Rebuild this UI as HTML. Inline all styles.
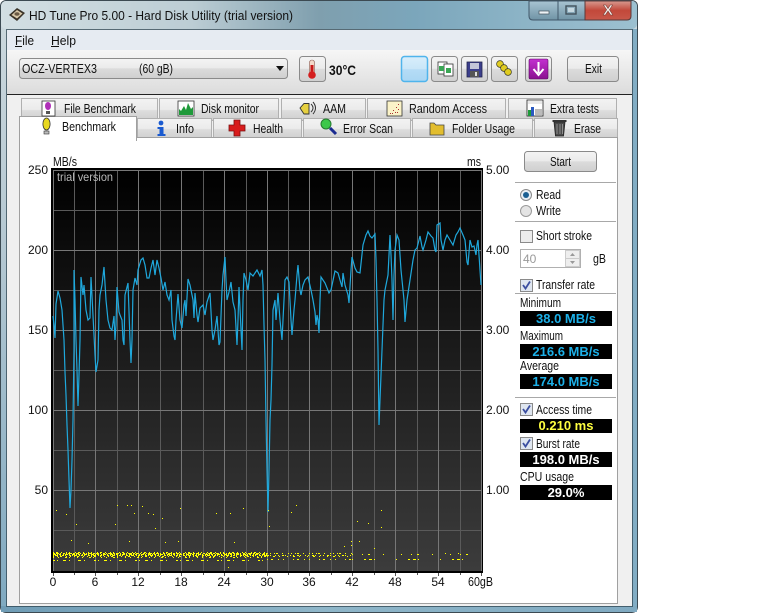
<!DOCTYPE html>
<html><head><meta charset="utf-8"><style>
html,body{margin:0;padding:0;background:#fff;width:768px;height:614px;overflow:hidden}
svg{position:absolute;left:0;top:0;display:block}
text{font-family:"Liberation Sans",sans-serif;font-size:12px;fill:#111}
text[textLength]{font-size:12.6px}
.v{font-size:13px;font-weight:bold;text-anchor:middle}
.a{text-anchor:end}.m{text-anchor:middle}
</style></head><body>
<svg width="768" height="614" viewBox="0 0 768 614" xmlns="http://www.w3.org/2000/svg">
<defs>
<linearGradient id="ti" x1="0" x2="1" y1="0" y2="0"><stop offset="0" stop-color="#d3dfe3"/><stop offset=".3" stop-color="#bccdd4"/><stop offset=".5" stop-color="#7f9fae"/><stop offset=".65" stop-color="#7ba6bb"/><stop offset=".85" stop-color="#8fb6c8"/><stop offset="1" stop-color="#9cc0d0"/></linearGradient>
<linearGradient id="lf" x1="0" x2="0" y1="0" y2="1"><stop offset="0" stop-color="#cdd9de"/><stop offset=".4" stop-color="#b5c8d2"/><stop offset="1" stop-color="#7fa9c0"/></linearGradient>
<linearGradient id="bf" x1="0" x2="1" y1="0" y2="0"><stop offset="0" stop-color="#6f9cb5"/><stop offset=".5" stop-color="#8fb6c9"/><stop offset="1" stop-color="#80aac1"/></linearGradient>
<linearGradient id="tb" x1="0" x2="0" y1="0" y2="1"><stop offset="0" stop-color="#f6f6f6"/><stop offset="1" stop-color="#dcdcdc"/></linearGradient>
<linearGradient id="bt" x1="0" x2="0" y1="0" y2="1"><stop offset="0" stop-color="#f4f4f4"/><stop offset=".48" stop-color="#ebebeb"/><stop offset=".5" stop-color="#dcdcdc"/><stop offset="1" stop-color="#cfcfcf"/></linearGradient>
<linearGradient id="tab" x1="0" x2="0" y1="0" y2="1"><stop offset="0" stop-color="#f3f3f3"/><stop offset=".5" stop-color="#ebebeb"/><stop offset=".55" stop-color="#dddddd"/><stop offset="1" stop-color="#cfcfcf"/></linearGradient>
<linearGradient id="pl" x1="0" x2="0" y1="0" y2="1"><stop offset="0" stop-color="#000"/><stop offset="1" stop-color="#3c3c3c"/></linearGradient>
<linearGradient id="blue" x1="0" x2="0" y1="0" y2="1"><stop offset="0" stop-color="#d9eefb"/><stop offset=".5" stop-color="#c9e6f8"/><stop offset=".52" stop-color="#b5dcf6"/><stop offset="1" stop-color="#a9d6f3"/></linearGradient>
<linearGradient id="red" x1="0" x2="0" y1="0" y2="1"><stop offset="0" stop-color="#d79a90"/><stop offset=".5" stop-color="#c2483a"/><stop offset="1" stop-color="#c8584a"/></linearGradient>
<linearGradient id="capb" x1="0" x2="0" y1="0" y2="1"><stop offset="0" stop-color="#a8c4d2"/><stop offset="1" stop-color="#6f93a5"/></linearGradient>
<linearGradient id="pur" x1="0" x2="0" y1="0" y2="1"><stop offset="0" stop-color="#c32fd0"/><stop offset="1" stop-color="#8a1090"/></linearGradient>
</defs>

<!-- window frame -->
<rect x="0" y="0" width="638" height="613" rx="6" fill="#3c4a52"/>
<rect x="1" y="1" width="636" height="611" rx="5" fill="url(#lf)"/>
<rect x="1" y="1" width="636" height="28" rx="5" fill="url(#ti)"/>
<rect x="632" y="29" width="5" height="583" fill="#82adc4"/>
<rect x="1" y="606" width="636" height="6" fill="url(#bf)"/>
<rect x="6" y="29" width="627" height="578" fill="#2f4552" opacity=".75"/>
<rect x="7" y="30" width="625" height="576" fill="#f0f0f0"/>

<!-- title -->
<g><path d="M9 15 L17 8 L25 13 L17 21 Z" fill="#3a3328"/><path d="M11.500 15 L17 10 L22.500 13.500 L17 18.500 Z" fill="#d8c8a8"/><ellipse cx="17" cy="14" rx="2.600" ry="1.800" fill="#6a5a44"/></g>
<text x="29" y="20" style="font-size:13.2px" textLength="264" lengthAdjust="spacingAndGlyphs">HD Tune Pro 5.00 - Hard Disk Utility (trial version)</text>

<!-- caption buttons -->
<path d="M529 1 V16 Q529 20 533 20 H585 V1 Z" fill="url(#capb)" stroke="#41586a" stroke-width="1"/>
<path d="M585 1 H631 V16 Q631 20 627 20 H585 Z" fill="url(#red)" stroke="#5a3a3a" stroke-width="1"/>
<line x1="558" y1="1" x2="558" y2="20" stroke="#41586a"/>
<rect x="539" y="11" width="10" height="3" fill="#eef3f6" stroke="#42525c" stroke-width=".7"/>
<rect x="566" y="6" width="10" height="8" fill="none" stroke="#42525c" stroke-width="1.4"/><rect x="568" y="8" width="6" height="4" fill="#c7d8e0"/>
<text x="608" y="15" class="m" style="font-size:15px;font-weight:bold;fill:#f8eeea;stroke:#6a3a34;stroke-width:.5">X</text>

<!-- menu + toolbar -->
<rect x="7" y="30" width="625" height="20" fill="#e6ebf2"/>
<rect x="7" y="50" width="625" height="44" fill="url(#tb)"/>
<rect x="7" y="94" width="625" height="1" fill="#222"/>
<text x="15" y="45" textLength="19" lengthAdjust="spacingAndGlyphs">File</text><line x1="15" y1="46.5" x2="22" y2="46.5" stroke="#111"/>
<text x="51" y="45" textLength="25" lengthAdjust="spacingAndGlyphs">Help</text><line x1="51" y1="46.5" x2="59" y2="46.5" stroke="#111"/>

<!-- combo -->
<rect x="19.500" y="58.500" width="268" height="20" rx="3" fill="url(#bt)" stroke="#8a8a8a"/>
<text x="22" y="73" textLength="75" lengthAdjust="spacingAndGlyphs">OCZ-VERTEX3</text>
<text x="139" y="73" textLength="34" lengthAdjust="spacingAndGlyphs">(60 gB)</text>
<path d="M276 66 h8 l-4 5 z" fill="#111"/>

<!-- toolbar buttons -->
<rect x="299.500" y="56.500" width="26" height="25" rx="3" fill="url(#bt)" stroke="#8a8a8a"/>
<g><rect x="309.500" y="60" width="5" height="14" rx="2.500" fill="#f2d8c8" stroke="#8a5a50" stroke-width=".6"/><rect x="310.500" y="65" width="3" height="9" fill="#c81818"/><circle cx="312" cy="75" r="3.800" fill="#d41e1e"/></g>
<text x="329" y="75" style="font-size:13.4px;font-weight:bold" textLength="27" lengthAdjust="spacingAndGlyphs">30°C</text>

<rect x="401.500" y="56.500" width="26" height="25" rx="3" fill="url(#blue)" stroke="#4fb4ec" stroke-width="1.500"/>
<rect x="431.500" y="56.500" width="26" height="25" rx="3" fill="url(#bt)" stroke="#8a8a8a"/>
<rect x="461.500" y="56.500" width="26" height="25" rx="3" fill="url(#bt)" stroke="#8a8a8a"/>
<rect x="491.500" y="56.500" width="26" height="25" rx="3" fill="url(#bt)" stroke="#8a8a8a"/>
<rect x="525.500" y="56.500" width="26" height="25" rx="3" fill="url(#bt)" stroke="#8a8a8a"/>
<rect x="567.500" y="56.500" width="51" height="25" rx="3" fill="url(#bt)" stroke="#8a8a8a"/>
<text x="585" y="73" textLength="17" lengthAdjust="spacingAndGlyphs">Exit</text>
<!-- copy icon -->
<rect x="438" y="62" width="9" height="12" fill="#fff" stroke="#333" stroke-width=".8"/><rect x="444" y="64" width="9" height="12" fill="#fff" stroke="#333" stroke-width=".8"/><rect x="439" y="66" width="5" height="5" fill="#3aa655"/><rect x="446" y="68" width="5" height="5" fill="#3aa655"/>
<!-- save icon -->
<rect x="467" y="62" width="15" height="15" fill="#3c3f8c" stroke="#22244e" stroke-width=".8"/><rect x="470" y="63" width="9" height="6" fill="#c4c6d8"/><rect x="470" y="71" width="9" height="6" fill="#555"/><rect x="475" y="72" width="2" height="4" fill="#ddd"/>
<!-- options icon -->
<g stroke="#3a3a20" stroke-width=".7" fill="#e0cc20"><circle cx="500" cy="64" r="3.400"/><circle cx="504" cy="68" r="3.400"/><circle cx="508" cy="72" r="3.400"/></g>
<!-- purple -->
<rect x="529" y="59" width="19" height="20" rx="1.500" fill="url(#pur)" stroke="#5a0a60" stroke-width=".6"/>
<path d="M538.500 62 V73 M533.500 69 L538.500 75 L543.500 69" fill="none" stroke="#fff" stroke-width="2"/>

<!-- back tabs -->
<g fill="url(#tab)" stroke="#b0b0b0">
<rect x="21.500" y="98.500" width="136" height="22"/>
<rect x="159.500" y="98.500" width="119" height="22"/>
<rect x="281.500" y="98.500" width="84" height="22"/>
<rect x="367.500" y="98.500" width="138" height="22"/>
<rect x="508.500" y="98.500" width="108" height="22"/>
<rect x="137.500" y="118.500" width="74" height="20"/>
<rect x="213.500" y="118.500" width="88" height="20"/>
<rect x="303.500" y="118.500" width="107" height="20"/>
<rect x="412.500" y="118.500" width="120" height="20"/>
<rect x="534.500" y="118.500" width="83" height="20"/>
</g>
<!-- page -->
<rect x="19.500" y="137.500" width="598" height="466" fill="#fff" stroke="#a0a0a0"/>
<rect x="19.500" y="116.500" width="117" height="24" fill="#fff" stroke="#a0a0a0"/>
<rect x="20" y="130" width="116" height="12" fill="#fff"/>

<text x="64" y="113" textLength="72" lengthAdjust="spacingAndGlyphs">File Benchmark</text>
<text x="201" y="113" textLength="58" lengthAdjust="spacingAndGlyphs">Disk monitor</text>
<text x="323" y="113" textLength="23" lengthAdjust="spacingAndGlyphs">AAM</text>
<text x="409" y="113" textLength="78" lengthAdjust="spacingAndGlyphs">Random Access</text>
<text x="550" y="113" textLength="49" lengthAdjust="spacingAndGlyphs">Extra tests</text>
<text x="62" y="131" textLength="54" lengthAdjust="spacingAndGlyphs">Benchmark</text>
<text x="176" y="133" textLength="18" lengthAdjust="spacingAndGlyphs">Info</text>
<text x="253" y="133" textLength="30" lengthAdjust="spacingAndGlyphs">Health</text>
<text x="343" y="133" textLength="50" lengthAdjust="spacingAndGlyphs">Error Scan</text>
<text x="452" y="133" textLength="63" lengthAdjust="spacingAndGlyphs">Folder Usage</text>
<text x="574" y="133" textLength="27" lengthAdjust="spacingAndGlyphs">Erase</text>

<!-- tab icons -->
<rect x="42" y="101" width="13" height="15" fill="#fff" stroke="#333" stroke-width=".8"/><ellipse cx="48" cy="106" rx="3" ry="4" fill="#b030b8"/><rect x="46" y="111" width="4" height="3" fill="#555"/>
<rect x="178" y="101" width="16" height="15" fill="#fff" stroke="#333" stroke-width=".8"/><path d="M179 115 V109 L181 111 L184 106 L186 110 L188 103 L191 109 L193 107 V115 Z" fill="#1f9a3a"/>
<path d="M300 108 L304 103.500 H309 V114 H304 Z" fill="#e6d040" stroke="#333" stroke-width=".9"/><path d="M311 104 Q315 108 311 112 M313 102 Q318 108 313 114" fill="none" stroke="#333"/>
<rect x="387" y="101" width="15" height="15" fill="#fbf3c8" stroke="#333" stroke-width=".8"/><path d="M390 113h1v1h-1zM393 110h1v1h-1zM396 107h1v1h-1zM398 104h1v1h-1zM395 112h1v1h-1zM398 109h1v1h-1zM392 113h1v1h-1zM397 112h1v1h-1z" fill="#a33"/>
<rect x="527" y="100" width="16" height="16" fill="#fff" stroke="#222" stroke-width=".8"/><rect x="528" y="101" width="14" height="3" fill="#e8e8e8"/><rect x="528" y="110" width="3" height="6" fill="#1f9a3a"/><rect x="531" y="107" width="3" height="9" fill="#2a5ac0"/><path d="M535 109h7v6h-7z" fill="#bbb"/>
<ellipse cx="46.500" cy="124" rx="3.600" ry="6" fill="#e8d820" stroke="#333" stroke-width=".8"/><rect x="44" y="131" width="5" height="3" fill="#bbb" stroke="#333" stroke-width=".6"/>
<circle cx="161" cy="123" r="2.400" fill="#1a5ad0"/><path d="M157.500 127 h6 v7 h2 v2 h-8 v-2 h2 v-5 h-2 z" fill="#1a5ad0"/>
<path d="M234 120 h6 v5 h5 v6 h-5 v5 h-6 v-5 h-5 v-6 h5 z" fill="#d81c1c" stroke="#7a1010" stroke-width=".8"/>
<circle cx="326" cy="124" r="5" fill="#3cc84a" stroke="#267a30"/><path d="M330 128 L336 134" stroke="#1a2a90" stroke-width="3"/>
<path d="M430 123 h4 l2 2 h8 v10 h-14 z" fill="#e2bd2e" stroke="#444" stroke-width=".8"/>
<path d="M554 122 h11 l-1.500 14 h-8 z" fill="#4a4a4a" stroke="#222" stroke-width=".8"/><rect x="552.500" y="120" width="14" height="2" fill="#333"/><path d="M557 124v10M560 124v10M562.500 124v10" stroke="#bbb" stroke-width=".6"/>

<!-- plot -->
<rect x="51" y="168" width="432" height="405" fill="#000"/>
<rect x="53" y="170" width="429" height="401" fill="url(#pl)"/>
<g stroke="#5a5a5a" stroke-width="1">
<path d="M74.500 170V571M117.500 170V571M160.500 170V571M203.500 170V571M246.500 170V571M288.500 170V571M331.500 170V571M374.500 170V571M417.500 170V571M460.500 170V571"/>
<path d="M53 210.500H482M53 290.500H482M53 370.500H482M53 450.500H482M53 530.500H482"/>
</g>
<g stroke="#777" stroke-width="1">
<path d="M53.500 170V571M95.500 170V571M138.500 170V571M181.500 170V571M224.500 170V571M267.500 170V571M309.500 170V571M352.500 170V571M395.500 170V571M438.500 170V571M481.500 170V571"/>
<path d="M53 170.500H482M53 250.500H482M53 330.500H482M53 410.500H482M53 490.500H482"/>
</g>
<text x="57" y="181" style="fill:#b8b8b8;font-size:12px" textLength="56" lengthAdjust="spacingAndGlyphs">trial version</text>

<!-- trace -->
<polyline fill="none" stroke="#1fa8dc" stroke-width="1.200" points="53,316 54,325 55,338 56,304 58,291 60,298 62,310 63,325 64,340 65,372 66,395 67,425 68,450 69,480 70,508 71,490 72,460 73,420 74,350 74,270 75,300 76,340 77,370 78,406 79,375 80,340 81,277 83,295 84,285 86,310 88,320 90,318 91,277 92,296 94,335 95,355 96,372 98,360 99,310 100,295 102,285 104,267 106,300 108,320 110,328 112,330 114,316 115,340 116,325 117,287 119,312 120,315 122,320 123,340 124,345 125,295 128,283 130,340 131,363 132,340 133,290 135,278 137,285 138,270 141,260 143,258 145,265 147,278 149,278 151,268 153,260 155,275 157,260 159,268 161,278 163,290 165,282 167,295 169,300 171,290 172,320 174,336 175,340 176,320 178,294 180,320 182,328 184,305 185,300 186,316 188,279 190,285 193,300 194,318 195,293 197,315 198,322 200,308 203,305 205,315 207,302 210,293 212,330 213,340 215,330 217,316 219,345 220,342 222,290 223,275 225,257 226,280 227,300 229,292 231,282 233,302 235,310 237,345 238,320 239,287 241,330 242,350 243,300 244,273 246,280 248,290 250,273 253,276 257,270 260,276 262,270 263,285 264,325 265,360 266,420 267,470 268,512 269,470 270,420 271,400 272,365 273,310 275,300 276,320 278,293 280,320 282,340 284,300 285,280 287,277 289,282 291,320 292,335 294,310 295,300 297,275 298,265 300,290 301,295 303,285 305,280 308,277 311,290 313,300 315,312 316,325 317,315 318,320 319,333 320,300 321,277 325,283 329,293 331,290 335,271 338,273 340,280 342,287 343,273 345,285 348,295 349,303 351,270 352,257 355,268 357,272 360,273 363,245 366,235 368,231 370,236 372,238 375,234 376,260 377,300 378,350 379,425 380,400 382,350 384,300 385,290 388,275 390,235 391,255 392,280 393,320 394,275 395,250 397,235 399,240 401,270 402,280 404,300 405,322 407,300 410,280 413,260 415,250 417,248 420,236 422,247 423,250 426,240 428,232 431,236 433,238 435,250 436,252 437,225 440,223 441,240 443,250 445,240 447,235 450,240 453,245 456,235 458,232 460,228 463,235 465,240 467,262 468,265 470,240 472,247 474,246 476,255 477,245 478,240 480,270 481,285"/>

<!-- access dots -->
<g fill="none" stroke="#ffff00" stroke-width="1">
<path d="M53 552.500H267" stroke-dasharray="1 2 2 3 1 4 1 2 1 5"/>
<path d="M53 553.500H267" stroke-dasharray="2 1 3 1 1 2 2 1 1 1 4 1"/>
<path d="M53 554.500H267" stroke-dasharray="3 1 1 1 2 2 1 1 3 1 1 2"/>
<path d="M53 555.500H267" stroke-dasharray="1 1 3 2 1 1 2 1 1 3 2 1"/>
<path d="M53 556.500H267" stroke-dasharray="1 3 1 2 2 4 1 3"/>
<path d="M53 557.500H267" stroke-dasharray="1 4 1 6 2 2 1 7"/>
<path d="M53 560.500H267" stroke-dasharray="2 2 1 5 3 3 1 8 3 3 1 9"/>
<path d="M267 553.500H352" stroke-dasharray="1 2 1 3 1 1 2 4 1 5"/>
<path d="M267 555.500H352" stroke-dasharray="2 1 1 4 1 2 1 3"/>
<path d="M267 556.500H352" stroke-dasharray="1 5 2 4 1 7"/>
<path d="M267 559.500H352" stroke-dasharray="1 3 2 5 1 4 1 9"/>
<path d="M352 554.500H470" stroke-dasharray="1 9 1 5 2 13 1 17"/>
<path d="M352 559.500H470" stroke-dasharray="1 11 2 3 3 2 1 21"/>
</g>
<path d="M56 510h1v1h-1zM66 514h1v1h-1zM76 524h1v1h-1zM71 540h1v1h-1zM88 543h1v1h-1zM117 505h1v1h-1zM127 505h1v1h-1zM131 505h1v1h-1zM142 506h1v1h-1zM134 513h1v1h-1zM148 513h1v1h-1zM153 514h1v1h-1zM115 524h1v1h-1zM162 518h1v1h-1zM155 528h1v1h-1zM129 541h1v1h-1zM165 542h1v1h-1zM178 541h1v1h-1zM180 508h1v1h-1zM216 513h1v1h-1zM230 513h1v1h-1zM243 508h1v1h-1zM234 542h1v1h-1zM268 510h1v1h-1zM269 526h1v1h-1zM291 512h1v1h-1zM296 505h1v1h-1zM357 521h1v1h-1zM368 523h1v1h-1zM381 510h1v1h-1zM381 527h1v1h-1zM351 541h1v1h-1zM359 541h1v1h-1zM351 545h1v1h-1zM344 546h1v1h-1zM374 548h1v1h-1zM458 553h1v1h-1zM445 553h1v1h-1zM228 567h1v1h-1z" fill="#ffff00"/>

<!-- bottom ticks -->
<path d="M53.500 573v3M74.500 573v2M95.500 573v3M117.500 573v2M138.500 573v3M160.500 573v2M181.500 573v3M203.500 573v2M224.500 573v3M246.500 573v2M267.500 573v3M288.500 573v2M309.500 573v3M331.500 573v2M352.500 573v3M374.500 573v2M395.500 573v3M417.500 573v2M438.500 573v3M460.500 573v2M481.500 573v3" stroke="#555"/>

<!-- axis labels -->
<text x="53" y="166" textLength="24" lengthAdjust="spacingAndGlyphs">MB/s</text>
<text x="467" y="166" textLength="14" lengthAdjust="spacingAndGlyphs">ms</text>
<g class="a">
<text x="48" y="174" class="a">250</text><text x="48" y="254" class="a">200</text><text x="48" y="334" class="a">150</text><text x="48" y="414" class="a">100</text><text x="48" y="494" class="a">50</text>
</g>
<text x="486" y="174">5.00</text><text x="486" y="254">4.00</text><text x="486" y="334">3.00</text><text x="486" y="414">2.00</text><text x="486" y="494">1.00</text>
<g>
<text x="53" y="586" class="m">0</text><text x="95" y="586" class="m">6</text><text x="138" y="586" class="m">12</text><text x="181" y="586" class="m">18</text><text x="224" y="586" class="m">24</text><text x="267" y="586" class="m">30</text><text x="309" y="586" class="m">36</text><text x="352" y="586" class="m">42</text><text x="395" y="586" class="m">48</text><text x="438" y="586" class="m">54</text><text x="468" y="586" textLength="25" lengthAdjust="spacingAndGlyphs">60gB</text>
</g>

<!-- right panel -->
<rect x="524.500" y="151.500" width="72" height="20" rx="3" fill="url(#bt)" stroke="#8a8a8a"/>
<text x="550" y="166" textLength="21" lengthAdjust="spacingAndGlyphs">Start</text>
<path d="M515 182.500H616M515 221.500H616M515 293.500H616M515 397.500H616" stroke="#a8a8a8"/>

<circle cx="526" cy="195" r="5.500" fill="#e8eef4" stroke="#8a8a8a"/><circle cx="526" cy="195" r="3" fill="#1a5f92"/>
<text x="536" y="199" textLength="25" lengthAdjust="spacingAndGlyphs">Read</text>
<circle cx="526" cy="211" r="5.500" fill="#e4e4e4" stroke="#9a9a9a"/>
<text x="536" y="215" textLength="25" lengthAdjust="spacingAndGlyphs">Write</text>

<rect x="520.500" y="230.500" width="12" height="12" fill="#ececec" stroke="#8a8a8a"/>
<text x="536" y="240" textLength="56" lengthAdjust="spacingAndGlyphs">Short stroke</text>
<rect x="520.500" y="249.500" width="60" height="18" fill="#fff" stroke="#b0b0b0"/>
<text x="523" y="263" style="fill:#999">40</text>
<rect x="565.500" y="250.500" width="14" height="8" fill="#eee" stroke="#ccc"/><rect x="565.500" y="258.500" width="14" height="8" fill="#eee" stroke="#ccc"/>
<path d="M570 256l2.500-3 2.500 3zM570 261l2.500 3 2.500-3z" fill="#999"/>
<text x="593" y="263" textLength="13" lengthAdjust="spacingAndGlyphs">gB</text>

<g fill="#dfe6f0" stroke="#8a8a8a">
<rect x="520.500" y="279.500" width="12" height="12"/>
<rect x="520.500" y="403.500" width="12" height="12"/>
<rect x="520.500" y="437.500" width="12" height="12"/>
</g>
<g fill="none" stroke="#3c4fa0" stroke-width="1.800">
<path d="M523 285l2.500 3.500 4.500-7"/>
<path d="M523 409l2.500 3.500 4.500-7"/>
<path d="M523 443l2.500 3.500 4.500-7"/>
</g>
<text x="536" y="289" textLength="59" lengthAdjust="spacingAndGlyphs">Transfer rate</text>
<text x="520" y="307" textLength="41" lengthAdjust="spacingAndGlyphs">Minimum</text>
<text x="520" y="340" textLength="43" lengthAdjust="spacingAndGlyphs">Maximum</text>
<text x="520" y="370" textLength="39" lengthAdjust="spacingAndGlyphs">Average</text>
<text x="536" y="414" textLength="56" lengthAdjust="spacingAndGlyphs">Access time</text>
<text x="536" y="448" textLength="44" lengthAdjust="spacingAndGlyphs">Burst rate</text>
<text x="520" y="481" textLength="54" lengthAdjust="spacingAndGlyphs">CPU usage</text>

<g fill="#000">
<rect x="520" y="311" width="92" height="15"/><rect x="520" y="344" width="92" height="15"/><rect x="520" y="374" width="92" height="15"/><rect x="520" y="419" width="92" height="14"/><rect x="520" y="452" width="92" height="15"/><rect x="520" y="485" width="92" height="15"/>
</g>
<text x="566" y="323" class="v" style="fill:#1cb0e8">38.0 MB/s</text>
<text x="566" y="356" class="v" style="fill:#1cb0e8">216.6 MB/s</text>
<text x="566" y="386" class="v" style="fill:#1cb0e8">174.0 MB/s</text>
<text x="566" y="430" class="v" style="fill:#ffff40">0.210 ms</text>
<text x="566" y="464" class="v" style="fill:#fff">198.0 MB/s</text>
<text x="566" y="497" class="v" style="fill:#fff">29.0%</text>
</svg>
</body></html>
